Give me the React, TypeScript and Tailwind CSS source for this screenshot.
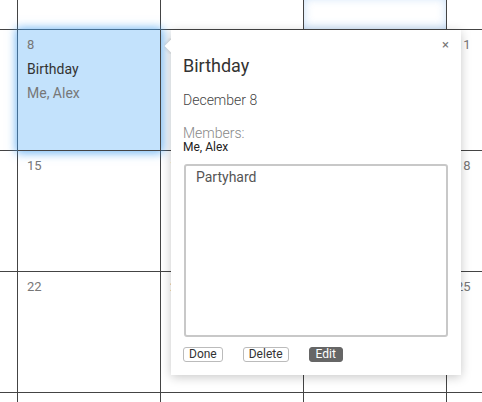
import React from "react";

type Cell = { day?: string };

const COLS = 5;
const rows: Cell[][] = [
    [{}, {}, {}, {}, {}],
    [{}, { day: "8" }, { day: "9" }, { day: "10" }, { day: "11" }],
    [{}, { day: "15" }, { day: "16" }, { day: "17" }, { day: "18" }],
    [{}, { day: "22" }, { day: "23" }, { day: "24" }, { day: "25" }],
    [{}, {}, {}, {}, {}],
];

function EventPopup() {
    return (
        <div className="absolute left-[171px] top-[30px] z-20 w-[290px] h-[345px] bg-white shadow-[0_2px_10px_rgba(0,0,0,0.22)] px-3">
            {/* pointer */}
            <div className="absolute -left-[7px] top-[8px] w-[7px] h-[16px] overflow-hidden">
                <div className="absolute left-[3px] top-[2px] w-[12px] h-[12px] bg-white rotate-45 shadow-[0_0_4px_rgba(0,0,0,0.2)]" />
            </div>

            <button type="button" className="absolute right-[12px] top-[8px] text-[13px] leading-[14px] text-[#777]">
                ×
            </button>

            <h2 className="mt-6 text-[18px] leading-6 text-[#333]">Birthday</h2>
            <p className="mt-3 text-[14px] leading-5 font-light text-[#444]">December 8</p>
            <p className="mt-[15px] text-[14px] leading-4 font-light text-[#888]">Members:</p>
            <p className="text-[12px] leading-3 text-[#222]">Me, Alex</p>

            <div className="mt-[11px] ml-px w-[264px] h-[173px] border-2 border-[#c8c8c8] rounded-[3px] pl-[10px] pt-[2px] text-[14px] leading-[18px] text-[#555]">
                Partyhard
            </div>

            <div className="mt-[10px] flex gap-5 text-[12px] leading-[13px]">
                <button type="button" className="px-[5px] border border-[#bbb] rounded-[3px] text-[#333] bg-white">Done</button>
                <button type="button" className="px-[5px] border border-[#bbb] rounded-[3px] text-[#333] bg-white">Delete</button>
                <button type="button" className="px-[6px] border border-[#666] rounded-[3px] text-white bg-[#666]">Edit</button>
            </div>
        </div>
    );
}

export default function App() {
    return (
        <div className="relative w-[482px] h-[402px] overflow-hidden bg-white font-['Roboto',sans-serif]">
            <div className="grid grid-cols-[18px_143px_143px_143px_1fr] grid-rows-[30px_121px_121px_121px_1fr] h-full">
                {rows.map((r, ri) =>
                    r.map((c, ci) => {
                        const selected = ri === 1 && ci === 1;
                        const glow = ri === 0 && ci === 3;
                        return (
                            <div
                                key={`${ri}-${ci}`}
                                className={`border-[#444] ${ci < COLS - 1 ? "border-r" : ""} ${ri < rows.length - 1 ? "border-b" : ""}
                                    ${selected ? "relative z-10 bg-[#c3e2fc] border-[#4f7fae] shadow-[0_0_9px_2px_rgba(70,160,240,0.75)]" : ""}
                                    ${glow ? "shadow-[inset_0_-2px_10px_rgba(130,185,240,0.45)]" : ""}
                                    pl-[9px] pt-[3px] text-[13px] leading-6 text-[#777]`}
                            >
                                {c.day && <div>{c.day}</div>}
                                {selected && (
                                    <>
                                        <div className="text-[14px] text-[#333]">Birthday</div>
                                        <div className="text-[14px] text-[#777]">Me, Alex</div>
                                    </>
                                )}
                            </div>
                        );
                    })
                )}
            </div>
            <EventPopup />
        </div>
    );
}
